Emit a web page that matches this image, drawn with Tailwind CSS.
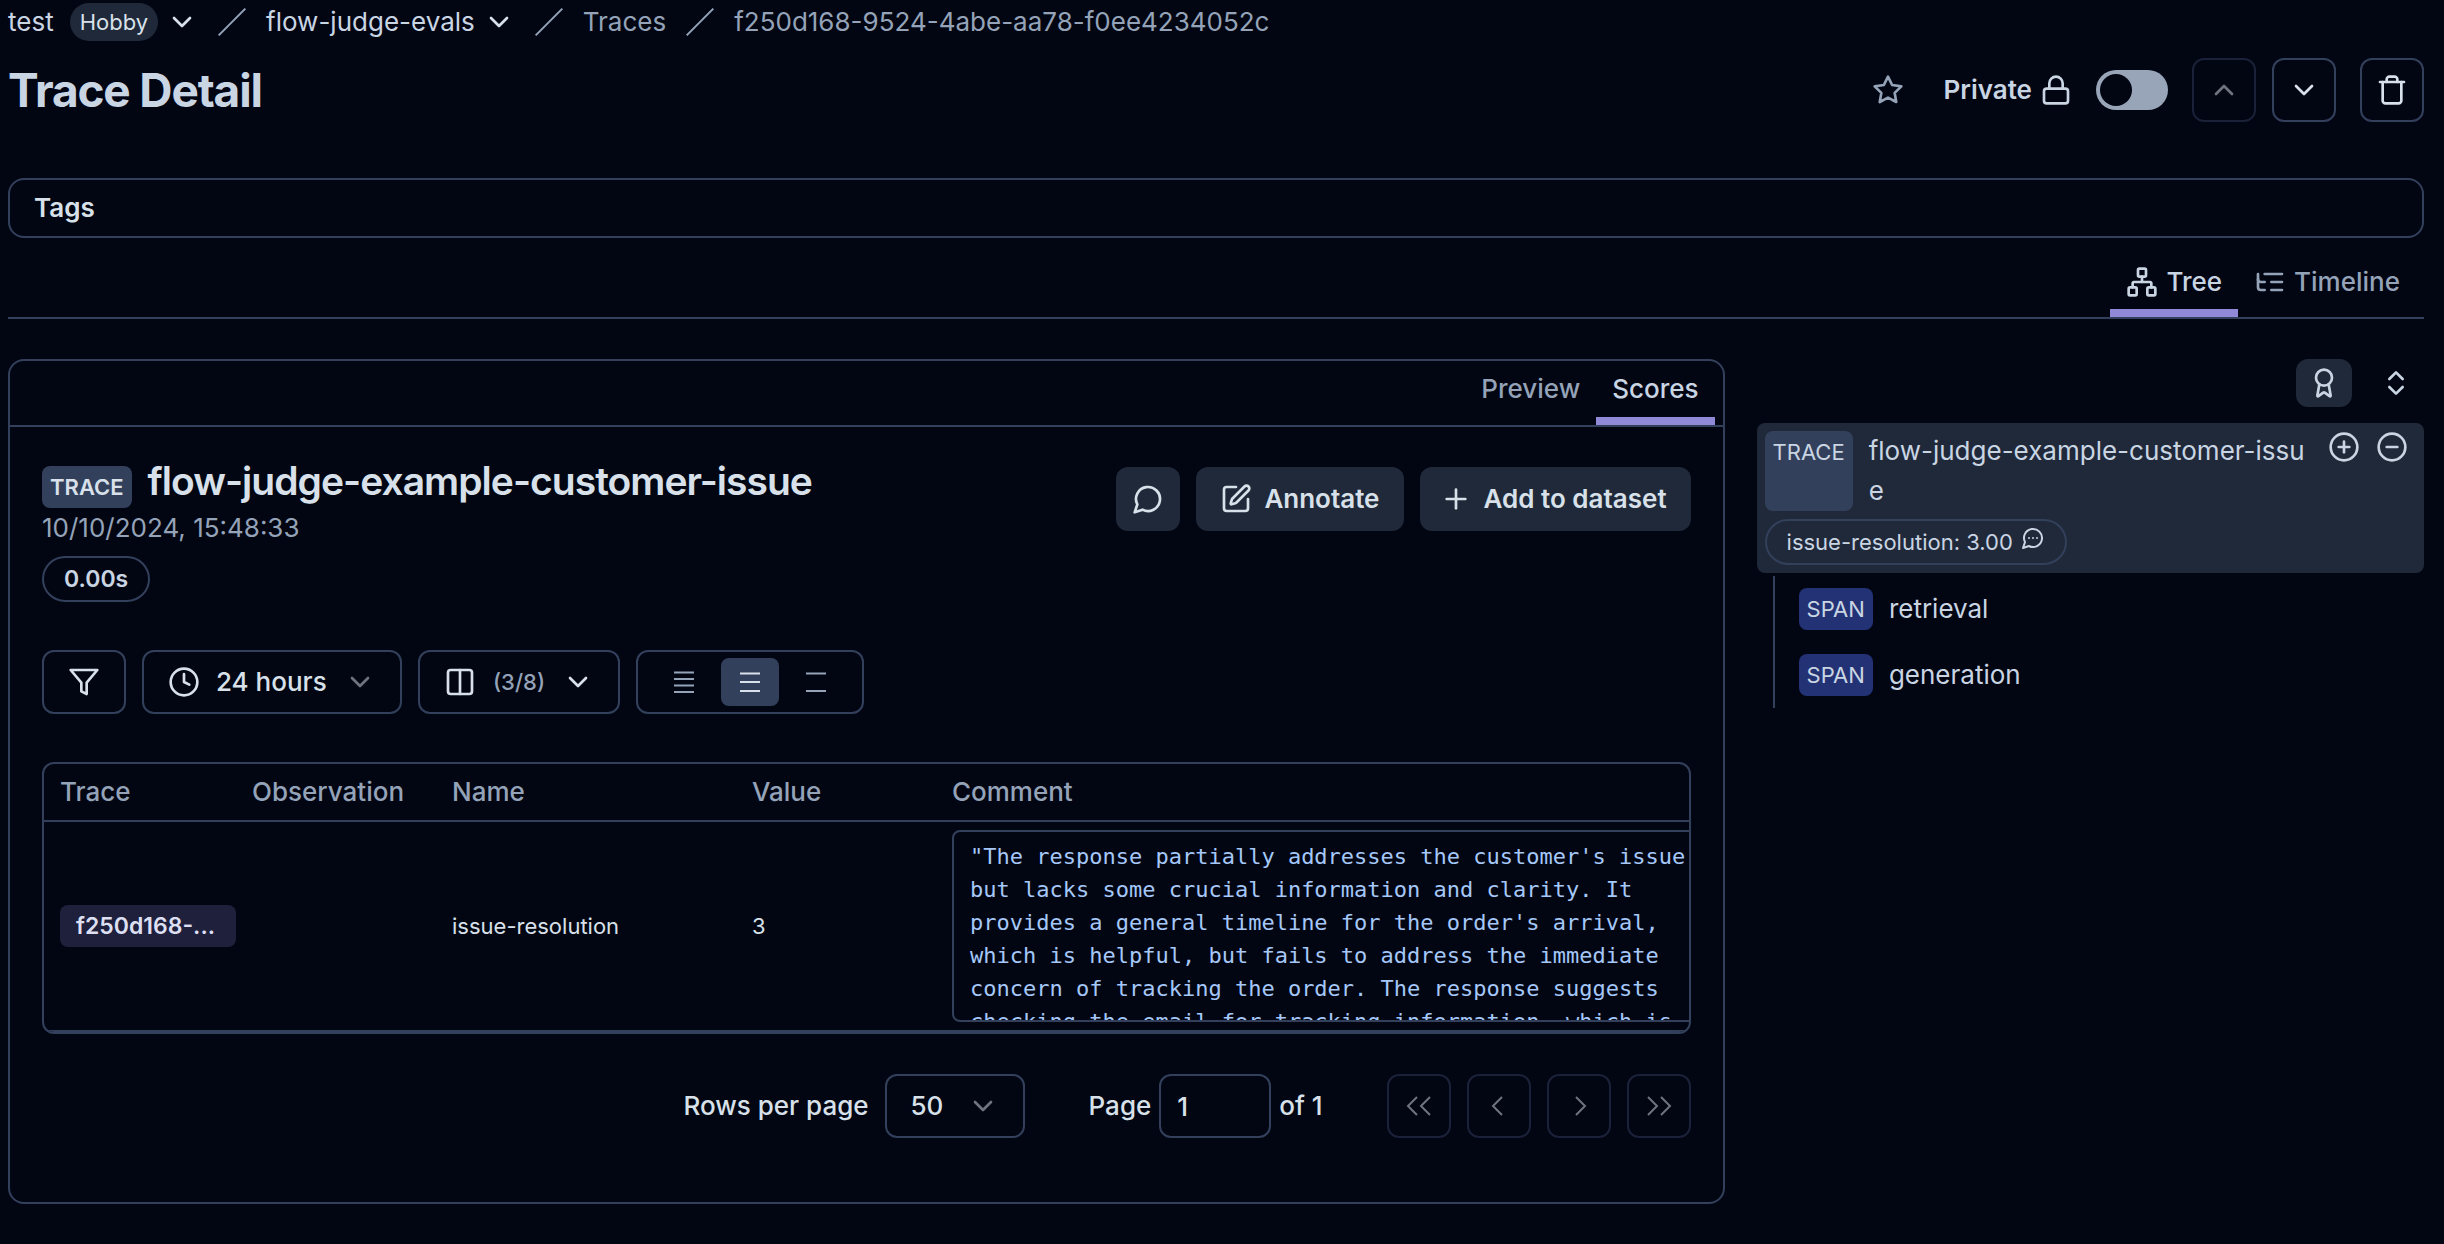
<!DOCTYPE html>
<html lang="en">
<head>
<meta charset="utf-8">
<title>Trace Detail</title>
<meta name="viewport" content="width=device-width, initial-scale=1">
<script src="https://cdn.jsdelivr.net/npm/@tailwindcss/browser@4"></script>
</head>
<body class="min-h-screen bg-[#020613] pr-5 pb-10 pl-2 font-['Inter',sans-serif] text-[26px] leading-10 text-[#d8e1ea]">

<!-- Icon sprite -->
<svg class="hidden" xmlns="http://www.w3.org/2000/svg">
  <symbol id="chevron-down" viewBox="0 0 24 24"><path d="m6 9 6 6 6-6"/></symbol>
  <symbol id="chevron-up" viewBox="0 0 24 24"><path d="m18 15-6-6-6 6"/></symbol>
  <symbol id="slash" viewBox="0 0 24 24"><path d="M22 2 2 22"/></symbol>
  <symbol id="star" viewBox="0 0 24 24"><path d="M12 2l3.09 6.26L22 9.27l-5 4.87 1.18 6.88L12 17.77l-6.18 3.25L7 14.14 2 9.27l6.91-1.01L12 2z"/></symbol>
  <symbol id="lock" viewBox="0 0 24 24"><rect width="18" height="11" x="3" y="11" rx="2"/><path d="M7 11V7a5 5 0 0 1 10 0v4"/></symbol>
  <symbol id="trash" viewBox="0 0 24 24"><path d="M3 6h18"/><path d="M19 6v14c0 1-1 2-2 2H7c-1 0-2-1-2-2V6"/><path d="M8 6V4c0-1 1-2 2-2h4c1 0 2 1 2 2v2"/></symbol>
  <symbol id="network" viewBox="0 0 24 24"><rect x="16" y="16" width="6" height="6" rx="1"/><rect x="2" y="16" width="6" height="6" rx="1"/><rect x="9" y="2" width="6" height="6" rx="1"/><path d="M5 16v-3a1 1 0 0 1 1-1h12a1 1 0 0 1 1 1v3"/><path d="M12 12V8"/></symbol>
  <symbol id="list-tree" viewBox="0 0 24 24"><path d="M21 12h-8"/><path d="M21 6H8"/><path d="M21 18h-8"/><path d="M3 6v4c0 1.1.9 2 2 2h3"/><path d="M3 10v6c0 1.1.9 2 2 2h3"/></symbol>
  <symbol id="message" viewBox="0 0 24 24"><path d="M7.9 20A9 9 0 1 0 4 16.1L2 22Z"/></symbol>
  <symbol id="message-more" viewBox="0 0 24 24"><path d="M7.9 20A9 9 0 1 0 4 16.1L2 22Z"/><path d="M8 12h.01"/><path d="M12 12h.01"/><path d="M16 12h.01"/></symbol>
  <symbol id="square-pen" viewBox="0 0 24 24"><path d="M12 3H5a2 2 0 0 0-2 2v14a2 2 0 0 0 2 2h14a2 2 0 0 0 2-2v-7"/><path d="M18.375 2.625a1 1 0 0 1 3 3l-9.013 9.014a2 2 0 0 1-.853.505l-2.873.84a.5.5 0 0 1-.62-.62l.84-2.873a2 2 0 0 1 .506-.852z"/></symbol>
  <symbol id="plus" viewBox="0 0 24 24"><path d="M5 12h14"/><path d="M12 5v14"/></symbol>
  <symbol id="award" viewBox="0 0 24 24"><path d="m15.477 12.89 1.515 8.526a.5.5 0 0 1-.81.47l-3.58-2.687a1 1 0 0 0-1.197 0l-3.586 2.686a.5.5 0 0 1-.81-.469l1.514-8.526"/><circle cx="12" cy="8" r="6"/></symbol>
  <symbol id="chevrons-up-down" viewBox="0 0 24 24"><path d="m7 15 5 5 5-5"/><path d="m7 9 5-5 5 5"/></symbol>
  <symbol id="circle-plus" viewBox="0 0 24 24"><circle cx="12" cy="12" r="10"/><path d="M8 12h8"/><path d="M12 8v8"/></symbol>
  <symbol id="circle-minus" viewBox="0 0 24 24"><circle cx="12" cy="12" r="10"/><path d="M8 12h8"/></symbol>
  <symbol id="filter" viewBox="0 0 24 24"><path d="M22 3H2l8 9.46V19l4 2v-8.54L22 3z"/></symbol>
  <symbol id="clock" viewBox="0 0 24 24"><circle cx="12" cy="12" r="10"/><path d="M12 6v6l4 2"/></symbol>
  <symbol id="columns" viewBox="0 0 24 24"><rect width="18" height="18" x="3" y="3" rx="2"/><path d="M12 3v18"/></symbol>
  <symbol id="rows-4" viewBox="0 0 32 32"><path d="M6 6.500h20M6 13h20M6 19.500h20M6 26h20"/></symbol>
  <symbol id="rows-3" viewBox="0 0 32 32"><path d="M6 7.500h20M6 16h20M6 25h20"/></symbol>
  <symbol id="rows-2" viewBox="0 0 32 32"><path d="M6 7.500h20M6 25h20"/></symbol>
  <symbol id="first" viewBox="0 0 32 32"><path d="M14 7 5 16l9 9M27 7l-9 9 9 9"/></symbol>
  <symbol id="prev" viewBox="0 0 32 32"><path d="m19 7-9 9 9 9"/></symbol>
  <symbol id="next" viewBox="0 0 32 32"><path d="m13 7 9 9-9 9"/></symbol>
  <symbol id="last" viewBox="0 0 32 32"><path d="m5 7 9 9-9 9M18 7l9 9-9 9"/></symbol>
</svg>

<nav aria-label="Breadcrumb" class="flex h-11 items-center gap-2 text-[#94a3b8]">
  <a href="#" class="text-[#c9d5e3]">test</a>
  <span class="ml-2 flex h-[38px] items-center rounded-full bg-[#202939] px-[10px] text-[22px] text-[#d8e1ea]">Hobby</span>
  <button aria-label="Switch organization"><svg class="size-8 fill-none stroke-[#d8e1ea] stroke-2 [stroke-linecap:round] [stroke-linejoin:round]"><use href="#chevron-down"/></svg></button>
  <svg class="mx-[10px] size-8 fill-none stroke-[#94a3b8] [stroke-width:1.5]"><use href="#slash"/></svg>
  <a href="#" class="text-[#c9d5e3]">flow-judge-evals</a>
  <button aria-label="Switch project"><svg class="size-8 fill-none stroke-[#d8e1ea] stroke-2 [stroke-linecap:round] [stroke-linejoin:round]"><use href="#chevron-down"/></svg></button>
  <svg class="mx-[10px] size-8 fill-none stroke-[#94a3b8] [stroke-width:1.5]"><use href="#slash"/></svg>
  <a href="#">Traces</a>
  <svg class="mx-[10px] size-8 fill-none stroke-[#94a3b8] [stroke-width:1.5]"><use href="#slash"/></svg>
  <a href="#">f250d168-9524-4abe-aa78-f0ee4234052c</a>
</nav>

<header class="mt-[14px] flex h-16 items-center justify-between">
  <h1 class="text-[46px] font-bold tracking-tight text-[#c9d5e3]">Trace Detail</h1>
  <div class="flex items-center gap-4">
    <button aria-label="Bookmark trace" class="mr-6"><svg class="size-8 fill-none stroke-[#94a3b8] stroke-2 [stroke-linecap:round] [stroke-linejoin:round]"><use href="#star"/></svg></button>
    <label for="public" class="mr-2 flex items-center gap-2 font-semibold text-[#c9d5e3]">Private
      <svg class="size-8 fill-none stroke-current stroke-2 [stroke-linecap:round] [stroke-linejoin:round]"><use href="#lock"/></svg>
    </label>
    <input id="public" type="checkbox" role="switch" class="mr-2 flex h-10 w-[72px] appearance-none items-center rounded-full bg-[#98a4b7] p-1 before:size-8 before:rounded-full before:bg-[#020613]">
    <button disabled aria-label="Previous trace" class="flex size-16 items-center justify-center rounded-xl border-2 border-[#1a2138] text-[#6d747f]"><svg class="size-8 fill-none stroke-current stroke-2 [stroke-linecap:round] [stroke-linejoin:round]"><use href="#chevron-up"/></svg></button>
    <button aria-label="Next trace" class="flex size-16 items-center justify-center rounded-xl border-2 border-[#33405c]"><svg class="size-8 fill-none stroke-current stroke-2 [stroke-linecap:round] [stroke-linejoin:round]"><use href="#chevron-down"/></svg></button>
    <button aria-label="Delete trace" class="ml-2 flex size-16 items-center justify-center rounded-xl border-2 border-[#33405c]"><svg class="size-8 fill-none stroke-current stroke-2 [stroke-linecap:round] [stroke-linejoin:round]"><use href="#trash"/></svg></button>
  </div>
</header>

<section class="mt-14 flex h-[60px] items-center rounded-2xl border-2 border-[#33405c] px-6">
  <h2 class="font-semibold">Tags</h2>
</section>

<div role="tablist" class="mt-4 flex justify-end border-b-2 border-[#33405c] pr-2 font-medium">
  <button role="tab" aria-selected="true" class="flex h-[63px] items-center gap-2 border-b-8 border-[#9089d8] px-4 text-[#c9d5e3]"><svg class="size-8 fill-none stroke-current stroke-2 [stroke-linecap:round] [stroke-linejoin:round]"><use href="#network"/></svg>Tree</button>
  <button role="tab" aria-selected="false" class="flex h-[63px] items-center gap-2 border-b-8 border-transparent px-4 text-[#94a3b8]"><svg class="size-8 fill-none stroke-current stroke-2 [stroke-linecap:round] [stroke-linejoin:round]"><use href="#list-tree"/></svg>Timeline</button>
</div>

<main class="mt-10 grid grid-cols-7 items-start gap-8">
  <section class="col-span-5 rounded-2xl border-2 border-[#33405c]">
    <div role="tablist" class="flex justify-end border-b-2 border-[#33405c] pr-2 font-medium">
      <button role="tab" aria-selected="false" class="h-16 border-b-8 border-transparent px-4 text-[#94a3b8]">Preview</button>
      <button role="tab" aria-selected="true" class="h-16 border-b-8 border-[#9089d8] px-4 text-[#c9d5e3]">Scores</button>
    </div>

    <div class="px-8 pt-[34px] pb-16">
      <div class="flex items-start justify-between">
        <div>
          <div class="flex items-baseline gap-4">
            <span class="rounded-lg bg-[#33405c] px-2 text-[22px] leading-[42px] font-semibold">TRACE</span>
            <h2 class="text-[39px] leading-10 font-semibold tracking-tight">flow-judge-example-customer-issue</h2>
          </div>
          <p class="text-[#94a3b8]">10/10/2024, 15:48:33</p>
          <span class="mt-2 flex h-[46px] w-fit items-center rounded-full border-2 border-[#33405c] px-5 text-[23px] font-semibold text-[#c9d5e3]">0.00s</span>
        </div>
        <div class="mt-[6px] flex gap-4 font-semibold">
          <button aria-label="Comments" class="flex size-16 items-center justify-center rounded-xl bg-[#202939]"><svg class="size-8 fill-none stroke-current stroke-2 [stroke-linecap:round] [stroke-linejoin:round]"><use href="#message"/></svg></button>
          <button class="flex h-16 items-center gap-3 rounded-xl bg-[#202939] px-6"><svg class="size-8 fill-none stroke-current stroke-2 [stroke-linecap:round] [stroke-linejoin:round]"><use href="#square-pen"/></svg>Annotate</button>
          <button class="flex h-16 items-center gap-3 rounded-xl bg-[#202939] px-5 pr-6"><svg class="size-8 fill-none stroke-current stroke-2 [stroke-linecap:round] [stroke-linejoin:round]"><use href="#plus"/></svg>Add to dataset</button>
        </div>
      </div>

      <div class="mt-12 flex gap-4 font-medium">
        <button aria-label="Filters" class="flex h-16 w-[84px] items-center justify-center rounded-xl border-2 border-[#33405c]"><svg class="size-8 fill-none stroke-current stroke-2 [stroke-linecap:round] [stroke-linejoin:round]"><use href="#filter"/></svg></button>
        <label class="flex h-16 w-[260px] items-center justify-between rounded-xl border-2 border-[#33405c] px-6">
          <svg class="size-8 fill-none stroke-current stroke-2 [stroke-linecap:round] [stroke-linejoin:round]"><use href="#clock"/></svg>
          <select aria-label="Time range" class="w-[112px] appearance-none"><option>24 hours</option></select>
          <svg class="size-8 fill-none stroke-[#6d747f] stroke-2 [stroke-linecap:round] [stroke-linejoin:round]"><use href="#chevron-down"/></svg>
        </label>
        <button aria-label="Columns" class="flex h-16 w-[202px] items-center justify-between rounded-xl border-2 border-[#33405c] px-6"><svg class="size-8 fill-none stroke-current stroke-2 [stroke-linecap:round] [stroke-linejoin:round]"><use href="#columns"/></svg><span class="text-[22px] text-[#94a3b8]">(3/8)</span><svg class="size-8 fill-none stroke-current stroke-2 [stroke-linecap:round] [stroke-linejoin:round]"><use href="#chevron-down"/></svg></button>
        <div role="group" aria-label="Row height" class="flex h-16 w-[228px] items-center justify-center gap-2 rounded-xl border-2 border-[#33405c] text-[#94a3b8]">
          <button aria-label="Small" class="flex h-12 w-[58px] items-center justify-center rounded-lg"><svg class="size-8 fill-none stroke-current stroke-2"><use href="#rows-4"/></svg></button>
          <button aria-label="Medium" class="flex h-12 w-[58px] items-center justify-center rounded-lg bg-[#33405c] text-[#d8e1ea]"><svg class="size-8 fill-none stroke-current stroke-2"><use href="#rows-3"/></svg></button>
          <button aria-label="Large" class="flex h-12 w-[58px] items-center justify-center rounded-lg"><svg class="size-8 fill-none stroke-current stroke-2"><use href="#rows-2"/></svg></button>
        </div>
      </div>

      <div class="mt-12 overflow-hidden rounded-xl border-2 border-[#33405c]">
        <table class="w-[1692px] table-fixed text-left">
          <colgroup><col class="w-[192px]"><col class="w-[200px]"><col class="w-[300px]"><col class="w-[200px]"><col class="w-[800px]"></colgroup>
          <thead>
            <tr class="h-[57px] border-b-2 border-[#33405c] text-[#94a3b8]">
              <th class="px-4 font-medium">Trace</th><th class="px-4 font-medium">Observation</th><th class="px-4 font-medium">Name</th><th class="px-4 font-medium">Value</th><th class="px-4 font-medium">Comment</th>
            </tr>
          </thead>
          <tbody>
            <tr class="h-[210px] border-b-2 border-[#33405c] text-[22px]">
              <td class="pl-4"><a href="#" class="flex h-[42px] items-center rounded-lg bg-[#1f203c] px-4 text-[23px] font-semibold text-[#dddff2]">f250d168-...</a></td>
              <td></td>
              <td class="px-4">issue-resolution</td>
              <td class="px-4">3</td>
              <td class="px-4 py-2"><div class="h-48 overflow-hidden rounded-lg border-2 border-[#33405c] px-4 pt-2 font-['DejaVu_Sans_Mono',monospace] leading-[33px] text-[#a5c8f9]">"The response partially addresses the customer's issue but lacks some crucial information and clarity. It provides a general timeline for the order's arrival, which is helpful, but fails to address the immediate concern of tracking the order. The response suggests checking the email for tracking information, which is</div></td>
            </tr>
          </tbody>
        </table>
      </div>

      <div class="mt-10 flex h-16 items-center justify-end font-medium">
        <label for="rows">Rows per page</label>
        <div class="ml-4 flex h-16 w-[140px] items-center justify-between rounded-xl border-2 border-[#33405c] px-6">
          <select id="rows" class="w-10 appearance-none"><option>50</option></select>
          <svg class="size-8 fill-none stroke-[#6d747f] stroke-2 [stroke-linecap:round] [stroke-linejoin:round]"><use href="#chevron-down"/></svg>
        </div>
        <label for="page" class="ml-16">Page</label>
        <input id="page" type="text" value="1" class="mx-2 h-16 w-28 rounded-xl border-2 border-[#33405c] px-4">
        <span>of 1</span>
        <div class="ml-16 flex gap-4 text-[#6d747f]">
          <button disabled aria-label="First page" class="flex size-16 items-center justify-center rounded-xl border-2 border-[#1a2138]"><svg class="size-8 fill-none stroke-current stroke-2"><use href="#first"/></svg></button>
          <button disabled aria-label="Previous page" class="flex size-16 items-center justify-center rounded-xl border-2 border-[#1a2138]"><svg class="size-8 fill-none stroke-current stroke-2"><use href="#prev"/></svg></button>
          <button disabled aria-label="Next page" class="flex size-16 items-center justify-center rounded-xl border-2 border-[#1a2138]"><svg class="size-8 fill-none stroke-current stroke-2"><use href="#next"/></svg></button>
          <button disabled aria-label="Last page" class="flex size-16 items-center justify-center rounded-xl border-2 border-[#1a2138]"><svg class="size-8 fill-none stroke-current stroke-2"><use href="#last"/></svg></button>
        </div>
      </div>
    </div>
  </section>

  <aside class="col-span-2 text-[#c9d5e3]">
    <div class="flex justify-end gap-4">
      <button aria-label="Show scores" class="flex h-12 w-14 items-center justify-center rounded-xl bg-[#202939]"><svg class="size-8 fill-none stroke-current stroke-2 [stroke-linecap:round] [stroke-linejoin:round]"><use href="#award"/></svg></button>
      <button aria-label="Expand or collapse" class="flex h-12 w-14 items-center justify-center rounded-xl"><svg class="size-8 fill-none stroke-current stroke-2 [stroke-linecap:round] [stroke-linejoin:round]"><use href="#chevrons-up-down"/></svg></button>
    </div>
    <div class="mt-4 rounded-lg bg-[#202939] p-2">
      <div class="flex gap-4 pr-2">
        <span class="rounded-lg bg-[#33405c] px-2 text-[22px] leading-[42px]">TRACE</span>
        <a href="#" class="min-w-0 flex-1 break-all">flow-judge-example-customer-issue</a>
        <button aria-label="Expand all" class="self-start"><svg class="size-8 fill-none stroke-current stroke-2 [stroke-linecap:round] [stroke-linejoin:round]"><use href="#circle-plus"/></svg></button>
        <button aria-label="Collapse all" class="self-start"><svg class="size-8 fill-none stroke-current stroke-2 [stroke-linecap:round] [stroke-linejoin:round]"><use href="#circle-minus"/></svg></button>
      </div>
      <span class="mt-2 flex h-[46px] w-fit items-center gap-2 rounded-full border-2 border-[#33405c] px-5 text-[22px]">issue-resolution: 3.00 <svg class="mb-2 size-6 fill-none stroke-current stroke-2 [stroke-linecap:round] [stroke-linejoin:round]"><use href="#message-more"/></svg></span>
    </div>
    <ul class="mt-[3px] ml-4 border-l-2 border-[#33405c] pl-6">
      <li class="flex items-center gap-4 py-3"><span class="flex h-[42px] items-center rounded-lg bg-[#233274] px-2 text-[22px]">SPAN</span><a href="#">retrieval</a></li>
      <li class="flex items-center gap-4 py-3"><span class="flex h-[42px] items-center rounded-lg bg-[#233274] px-2 text-[22px]">SPAN</span><a href="#">generation</a></li>
    </ul>
  </aside>
</main>
</body>
</html>
